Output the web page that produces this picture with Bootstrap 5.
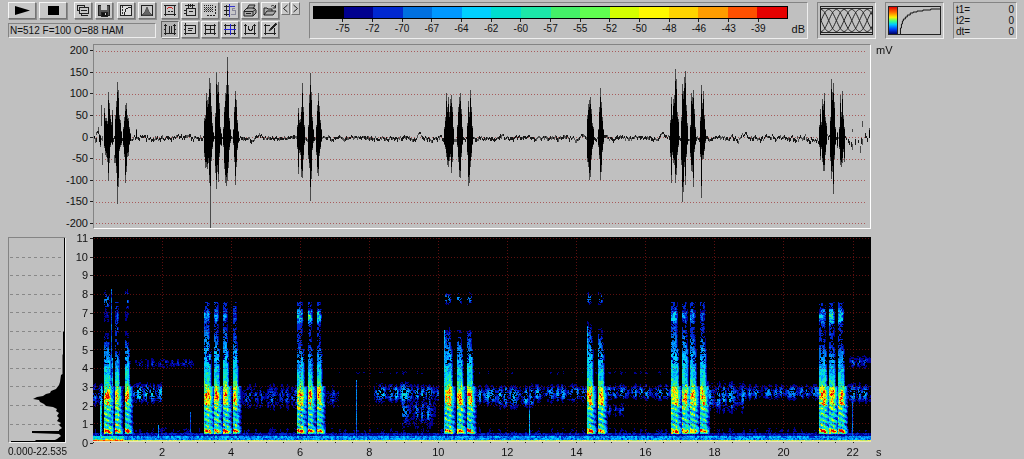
<!DOCTYPE html>
<html lang="en">
<head>
<meta charset="utf-8">
<meta name="viewport" content="width=device-width, initial-scale=1">
<title>Sound analysis</title>
<link href="https://cdn.jsdelivr.net/npm/bootstrap@5.3.0/dist/css/bootstrap.min.css" rel="stylesheet">
<script src="https://cdn.jsdelivr.net/npm/bootstrap@5.3.0/dist/js/bootstrap.bundle.min.js"></script>
<style>
body{background:#c0c0c0;color:#111;font:11px/12px "Liberation Sans",Arial,sans-serif}
.toolbar{gap:9px;padding:2px 7px 5px 8px}
.left-tools{gap:5px}
.file-tools{width:148px}
.icon-grid{display:grid;grid-template-columns:repeat(6,20px);gap:2px 0}
.tool{width:18px;height:17px;padding:0;border:1px solid;border-color:#f4f4f4 #747474 #747474 #f4f4f4;border-radius:0;background:#c8c8c8;box-shadow:1px 1px 0 #8c8c8c;display:flex;align-items:center;justify-content:center;color:#111}
.tool:hover,.tool.active{color:#111;background:#b4b4b4}
.tool.active{border-color:#666 #eee #eee #666}
.tool svg{width:14px;height:13px;fill:none;stroke:#222;shape-rendering:crispEdges}
.tool-wide{width:28px}
.tool-wide svg{width:20px;fill:#000;stroke:none;shape-rendering:auto}
.tool-slim{width:9px;height:13px;box-shadow:none}
.tool-slim svg{width:7px;height:9px;shape-rendering:auto}
.arrows{gap:1px;margin-left:-5px}
.sunken{border:1px solid;border-color:#848484 #eee #eee #848484}
.status{height:15px;padding:0 1px;margin-top:4px;font-size:10px;line-height:14px}
.panel-top{height:37px}
.scale{padding:3px 2px 0 3px}
.scale-bar{height:13px;border:1px solid #000}
.scale-labels{padding:0 3.125%;font-size:10px}
.scale-labels span::before{content:"";display:block;width:1px;height:3px;background:#222;margin:0 auto 1px}
.db{width:17px;padding-top:17px;text-align:right}
.win{width:59px;padding:3px 2px}
.win svg{width:100%;height:29px;border:1px solid #222}
.gamma{gap:1px;border:1px solid #222;height:29px}
.ramp{width:9px;background:linear-gradient(#e00000,#ff7000 20%,#fff000 38%,#40ff80 52%,#00c8ff 65%,#0040ff 82%,#000060);border-right:1px solid #222}
.gamma svg{border:0;height:27px;min-width:0}
.times{width:64px;padding:1px 2px;font-size:10px}
.times td{padding:0}
.times table{line-height:11px}
.plots{display:grid;grid-template-columns:58px 27px minmax(0,1fr) 153px;grid-template-rows:185px 206px auto;row-gap:8px;padding-left:8px}
.wave-axis{grid-column:1/3}
.axis{display:flex;flex-direction:column;justify-content:space-between;text-align:right;line-height:12px}
.axis span::after{content:"";display:inline-block;width:3px;height:1px;background:#222;vertical-align:3px;margin-left:2px}
.freq-axis{margin:-5px 0 -6px}
.plots canvas{display:block;width:100%;height:100%}
.wave{border:1px solid;border-color:#848484 #fff #fff #848484}
.spectrum svg{display:block;width:100%;height:100%}
.unit{padding-left:5px}
.caption-row{margin-top:-5px}
.range{white-space:nowrap;font-size:10px}
.time-axis{padding-left:4.4375%}
.time-axis span{flex:0 0 9.29%;text-align:center}
</style>
</head>
<body>
<header class="toolbar d-flex align-items-start">
 <div class="left-tools d-flex">
  <div class="file-tools">
   <div class="d-flex justify-content-between">
    <button class="btn tool tool-wide" aria-label="Play"><svg viewBox="0 0 20 13"><path d="M3 2L18 6.500L3 11Z"/></svg></button>
    <button class="btn tool tool-wide" aria-label="Stop"><svg viewBox="0 0 20 13"><path d="M5 2h11v9H5z"/></svg></button>
    <span></span>
    <button class="btn tool" aria-label="Copy settings"><svg viewBox="0 0 14 13"><path d="M1 1.500h7v2M1.500 1v5h2M3.500 3.500H13M3.500 3v6h9v-5M5.500 9v2.500h6M5 6.500h6"/></svg></button>
    <button class="btn tool" aria-label="Save"><svg viewBox="0 0 14 13"><path d="M1.500 1.500h11v10h-11z" fill="#555"/><path d="M4 1h6v5H4z" fill="#ccc" stroke="none"/><path d="M4 8h6v4H4z" fill="#111"/><path d="M8.500 9v2" stroke="#ccc"/></svg></button>
    <button class="btn tool" aria-label="Transfer curve"><svg viewBox="0 0 14 13"><path d="M1.500 1.500h11v10h-11z" fill="#ddd"/><path d="M3.500 2v9" stroke="#333" stroke-dasharray="2 1"/><path d="M5.500 11V8M6.500 8V5M7.500 5V4H9M9 3.500h3"/></svg></button>
    <button class="btn tool" aria-label="Window shape"><svg viewBox="0 0 14 13"><path d="M1.500 1.500h11v10h-11z"/><path d="M2 11L5 8L7 3L9 8L12 11Z" fill="#666" stroke="#555" style="shape-rendering:auto"/></svg></button>
   </div>
   <div class="status sunken">N=512 F=100 O=88 HAM</div>
  </div>
  <div class="icon-grid">
   <button class="btn tool" aria-label="Spectrogram view"><svg viewBox="0 0 14 13"><path d="M2.500 1v11M1 10.500h12M11.500 1v11M1 1.500h12"/><path d="M5 3.500h4M4 4.500h1M9 4.500h1" stroke="#c22"/><path d="M5 7.500h5" stroke-dasharray="2 1"/></svg></button>
   <button class="btn tool" aria-label="Scroll display"><svg viewBox="0 0 14 13"><path d="M2 1.500h10M5.500 0v4M7.500 0v3M9.500 0v4M3.500 4.500h9v7h-9zM1 6.500h3M1 9.500h3M6 7.500h4"/></svg></button>
   <button class="btn tool" aria-label="Selection"><svg viewBox="0 0 14 13"><path d="M1 1.500h9M1.500 1v8M3 3.500h7M3 5.500h7M3 7.500h7" stroke-dasharray="1 1"/><path d="M2 4.500h8M2 6.500h8" stroke="#666" stroke-dasharray="1 1"/><path d="M12.500 2v9M4 11.500h9" stroke-dasharray="2 1"/></svg></button>
   <button class="btn tool" aria-label="Cut sound"><svg viewBox="0 0 14 13"><path d="M1 2.500h5M1 6.500h5M1 10.500h5M3.500 1v11"/><path d="M6.500 0v13M7 2.500h5" stroke="#33c"/><path d="M12 4.500H9.500v2h3v4H8" stroke="#889"/></svg></button>
   <button class="btn tool" aria-label="Print"><svg viewBox="0 0 14 13" style="shape-rendering:auto"><path d="M4 5L6 1H12L10 5M1 7L4 4H11L13 6V9L10 12H1Z" fill="#aaa"/><path d="M1 7.500H10L13 5M3 9.500h5M10 8v4"/></svg></button>
   <button class="btn tool" aria-label="Open"><svg viewBox="0 0 14 13" style="shape-rendering:auto"><path d="M1 11V4h3l1 1h4v2M1 11L4 7h9l-3 4Z" fill="#aaa"/><path d="M8 2.500c2-2 3-1 4 1M12.500 1v3h-3"/></svg></button>
   <button class="btn tool active" aria-label="Grid columns"><svg viewBox="0 0 14 13"><path d="M2.500 1v11M6.500 3v8M8.500 3v8M11.500 1v11M1 10.500h12M1 2.500h3M10 2.500h3M1 6.500h2M11 6.500h2"/></svg></button>
   <button class="btn tool" aria-label="List view"><svg viewBox="0 0 14 13"><path d="M2.500 0v12M1 2.500h12M1 10.500h12M12.500 2v9M5 5.500h5M5 7.500h4M1 6.500h2"/></svg></button>
   <button class="btn tool" aria-label="Cross cursor"><svg viewBox="0 0 14 13"><path d="M2.500 1v11M7.500 2v9M11.500 1v11M1 2.500h12M3 6.500h9M1 10.500h12"/></svg></button>
   <button class="btn tool" aria-label="Blue cursor"><svg viewBox="0 0 14 13"><path d="M2.500 1v11M11.500 1v11M1 2.500h12M1 10.500h12"/><path d="M7.500 1v11M1 6.500h12" stroke="#22d"/></svg></button>
   <button class="btn tool" aria-label="Marker"><svg viewBox="0 0 14 13"><path d="M2.500 1v11M11.500 1v11M1 2.500h3M10 2.500h3M1 10.500h12M5.500 3v3h1v1h2v-1h1V3"/></svg></button>
   <button class="btn tool" aria-label="Draw label"><svg viewBox="0 0 14 13"><path d="M2.500 1v11M11.500 5v7M1 2.500h6M1 10.500h12"/><path d="M13 0L8 5L6 8L9 6L14 1" fill="#222" style="shape-rendering:auto"/></svg></button>
  </div>
  <div class="arrows d-flex">
   <button class="btn tool tool-slim" aria-label="Previous"><svg viewBox="0 0 7 9"><path d="M5.500 1L1.500 4.500L5.500 8"/></svg></button>
   <button class="btn tool tool-slim" aria-label="Next"><svg viewBox="0 0 7 9"><path d="M1.500 1L5.500 4.500L1.500 8"/></svg></button>
  </div>
 </div>
 <div class="scale panel-top sunken d-flex flex-grow-1">
  <div class="flex-grow-1">
   <div class="scale-bar d-flex" id="scaleBar"></div>
   <div class="scale-labels d-flex" id="scaleLabels"></div>
  </div>
  <div class="db">dB</div>
 </div>
 <div class="win panel-top sunken"><svg class="d-block" viewBox="0 0 53 27" preserveAspectRatio="none" aria-label="Window overlap"><path id="overlap" fill="none" stroke="#222"/></svg></div>
 <div class="win panel-top sunken"><div class="gamma d-flex"><div class="ramp flex-shrink-0"></div><svg viewBox="0 0 42 27" preserveAspectRatio="none" aria-label="Colour curve"><path d="M1.500 27V21h1V17h1V14h1V12h2V10h2V8h3V6h3V5h4V4h6V3h8V2h10" fill="none" stroke="#111" shape-rendering="crispEdges"/></svg></div></div>
 <div class="times panel-top sunken"><table class="w-100"><tbody>
  <tr><td>t1=</td><td class="text-end">0</td></tr>
  <tr><td>t2=</td><td class="text-end">0</td></tr>
  <tr><td>dt=</td><td class="text-end">0</td></tr></tbody></table></div>
</header>
<main class="plots">
 <div class="axis wave-axis" id="waveAxis"></div>
 <div class="wave"><canvas id="wave" role="img" aria-label="Waveform"></canvas></div>
 <div class="unit">mV</div>
 <div class="spectrum sunken"><svg viewBox="0 0 56 204" preserveAspectRatio="none" aria-label="Mean spectrum"><path id="specGrid" stroke="#888" stroke-dasharray="3 3" shape-rendering="crispEdges"/><path d="M56 0H55V93L54 94V116L53.500 117V136L52 137L51 144L50 147L47 151L42 153L41 155L37 156L34 158L28 159L24 161L30 162L31 164L35 166L37 168L44 169L48 171L47 173L50 175L48 178L50 180L48 183L52 185L50 187L53 190L50 192V193H23V195L50 196L52 198L48 201L46 202H27L26 203H2V204H56Z"/></svg></div>
 <div class="axis freq-axis" id="freqAxis"></div>
 <div><canvas id="sono" role="img" aria-label="Spectrogram"></canvas></div>
 <div></div>
 <div class="caption-row range">0.000-22.535</div>
 <div></div>
 <div class="caption-row time-axis d-flex" id="timeAxis"></div>
 <div class="caption-row unit">s</div>
</main>
<script>
const $ = id => document.getElementById(id);
const palette = ['#000000','#00008f','#0028d0','#0070e0','#0098ff','#00d0ff','#00dfcf','#1ce8a8','#44f068','#60ff50','#d4ff00','#fff800','#ffd400','#ff9c00','#ff5000','#e60000'];
const span = t => '<span>' + t + '</span>';
$('scaleBar').innerHTML = palette.map(c => '<div class="flex-fill" style="background:' + c + '"></div>').join('');
$('scaleLabels').innerHTML = [75,72,70,67,64,62,60,57,55,52,50,48,46,43,39].map(v => '<span class="flex-fill text-center">-' + v + '</span>').join('');
$('waveAxis').innerHTML = [200,150,100,50,0,-50,-100,-150,-200].map(span).join('');
$('freqAxis').innerHTML = [11,10,9,8,7,6,5,4,3,2,1,0].map(span).join('');
$('timeAxis').innerHTML = [2,4,6,8,10,12,14,16,18,20,22].map(span).join('');

let lattice = 'M0 1.500H53M0 25.500H53';
for (let s = -32; s < 53; s += 8) {
  for (let i = 0; i <= 32; i++) lattice += (i ? 'L' : 'M') + (s + i) + ' ' + (13.5 + 11 * Math.cos(i / 16 * Math.PI)).toFixed(1);
}
$('overlap').setAttribute('d', lattice);
let sg = '';
for (let k = 1; k < 11; k++) sg += 'M1 ' + (Math.round(k * 18.55) + .5) + 'H54';
$('specGrid').setAttribute('d', sg);

/* Call peaks: column, height above zero, depth below zero */
const spikes = '0,1,2;2,5,-2;4,10,-6;5,3,5;6,1,10;7,32,-11;8,-16,28;10,29,11;11,19,18;12,19,20;13,16,25;14,45,44;15,34,26;16,22,10;17,15,6;18,27,8;20,-18,26;21,22,26;22,36,36;23,55,67;24,47,50;25,22,14;26,17,10;27,6,8;29,10,10;30,20,20;31,32,46;32,34,35;33,22,20;34,19,19;35,10,8;36,4,4;42,8,2;110,19,20;111,22,31;112,44,30;113,37,32;114,40,26;115,59,46;116,54,91;117,31,24;118,14,12;119,5,5;121,24,36;122,65,52;123,52,35;124,55,45;125,34,20;126,10,8;127,4,9;129,10,10;130,30,32;131,44,46;132,52,49;133,80,44;134,52,31;135,19,13;136,8,6;139,8,8;140,30,25;141,46,48;142,37,30;143,17,13;144,6,6;203,12,12;204,29,37;205,17,16;206,18,18;207,30,40;208,54,41;209,30,22;210,12,8;214,12,22;215,42,31;216,64,64;217,45,42;218,20,13;219,8,6;222,12,18;223,32,36;224,44,39;225,31,19;226,17,12;227,8,5;350,10,8;351,20,12;352,44,20;353,30,28;354,40,30;355,25,24;356,38,20;357,42,36;358,30,25;359,10,8;363,12,10;364,30,25;365,40,40;366,44,41;367,28,20;368,10,8;373,14,18;374,36,49;375,25,46;376,47,30;377,30,20;378,11,8;493,22,25;494,33,30;495,37,43;496,40,40;497,28,22;498,14,12;499,10,8;504,8,10;505,30,22;506,49,43;507,35,35;508,20,15;509,8,7;576,17,20;577,40,46;578,22,18;579,38,26;580,42,28;581,68,46;582,58,38;583,25,18;584,18,10;587,20,28;588,53,65;589,46,55;590,60,30;591,66,48;592,32,20;593,14,8;596,12,20;597,44,34;598,40,35;599,47,50;600,28,15;601,10,8;606,20,20;607,52,61;608,34,22;609,46,22;610,22,14;611,8,6;725,12,10;726,28,23;727,15,12;728,38,25;729,33,34;730,44,34;731,20,18;732,14,8;736,20,24;737,58,42;738,45,35;739,54,57;740,35,22;741,10,8;743,5,11;745,10,12;746,42,28;747,25,30;748,46,26;749,22,15;750,10,25;758,8,-5;766,-9,16;768,16,-10;775,9,1'
  .split(';').map(s => s.split(',').map(Number));
/* Call columns: start, width, top frequency in kHz, strength of the upper band */
const calls = [[10,8,5.3,.1],[21,5,4.9,.2],[31,5,5.4,.1],[110,8,6.2,.3],[120,6,5.9,.3],[129,6,6.1,.25],[139,5,5.8,.18],[203,8,5.2,.36],[214,5,5.1,.5],[223,5,5.2,.42],[351,8,5.6,0],[363,6,5.5,0],[373,6,5.6,0],[493,6,5.9,0],[504,6,5.6,0],[577,8,6.2,.36],[588,6,6,.3],[596,6,5.8,.3],[606,6,5.7,.2],[725,8,5.2,.36],[735,6,5.1,.52],[744,6,5.2,.42]];
/* Faint reverberation: from, to, centre kHz, half height, strength */
const haze = [[0,9,2.5,.6,.24],[36,68,2.6,.5,.36],[36,100,4.2,.3,.14],[145,203,2.4,.7,.19],[228,245,2.4,.6,.17],[280,345,2.6,.45,.32],[308,342,1.6,.9,.22],[306,318,2.6,.5,.42],[379,437,2.5,.5,.3],[400,440,2.3,.5,.28],[437,493,2.6,.45,.28],[510,577,2.65,.4,.28],[510,530,1.7,.4,.17],[611,650,2.4,.8,.28],[650,725,2.65,.4,.25],[752,777,2.6,.5,.3],[755,777,4.3,.35,.2],[245,577,3.7,.15,.07],[0,777,.55,.3,.08]];
const lines = [[7,.1,2.2,.55],[8,.1,3,.35],[18,.1,8.2,.24],[19,.1,4.5,.4],[97,0,1.6,.2],[263,.1,3.3,.27],[435,.1,1.7,.4],[435,1.7,3,.2],[65,0,.9,.35],[758,0,2.2,.22],[351,.4,6,.4],[493,.4,6.2,.38]];
function rng(seed) { return () => (seed = (seed * 16807) % 2147483647) / 2147483647; }
function prep(c) {
  const w = c.width = c.clientWidth, h = c.height = c.clientHeight;
  return [c.getContext('2d'), w, h];
}
function drawWave() {
  const [g, w, h] = prep($('wave')), r = rng(77), k = w / 776, zero = Math.round(h / 2);
  for (let i = -4; i <= 4; i++) {
    g.fillStyle = '#a85c5c';
    const y = Math.round(zero + i * 21.6);
    for (let x = 2; x < w - 3; x += 3) g.fillRect(x, y, 1, 1);
  }
  let v = 0;
  for (let x = 0; x < w; x++) {
    const near = (x > 36 && x < 110) || (x > 630 && x < 726), edge = x < 10 || x > w - 24;
    const amp = edge ? 5 : near ? 2.4 : 1.5;
    v = v * .5 + (r() - .5) * amp * 2;
    const bump = 4 * Math.exp(-(((x + 15) % 81 - 17) ** 2) / 12) - 3 * Math.exp(-(((x + 15) % 81 - 11) ** 2) / 7);
    g.fillStyle = r() > .3 ? '#181818' : '#555';
    if (!edge || r() > .4) g.fillRect(x, Math.round(zero - v - bump * .8), 1, 2 + Math.floor(r() * (edge ? 5 : 2.4)));
  }
  for (const [x, u, d] of spikes) {
    const px = Math.round(x * k), top = zero - u, len = Math.min(u + d, h - top);
    g.fillStyle = '#4a4a4a'; g.fillRect(px, top, 1, len);
    g.fillStyle = '#000';
    if (u > 0 && d > 0) g.fillRect(px, Math.round(zero - u * .82), 1, Math.round((u + Math.min(d, 60)) * .82));
  }
}
function drawSono() {
  const [g, w, h] = prep($('sono')), r = rng(4242), k = w / 777, H = h - 2;
  g.fillStyle = '#000'; g.fillRect(0, 0, w, h);
  const bell = (f, c, s) => Math.exp(-((f - c) ** 2) / (2 * s * s));
  const bw = Math.ceil(w / 2) + 2, blocks = Array.from({length: bw * (Math.ceil(h / 3) + 2)}, r);
  for (let y = 1; y < h - 1; y++) {
    const f = (H - y) / 18.55;
    for (let x = 0; x < w; x++) {
      const X = x / k, n = r(), b = blocks[Math.floor(y / 3) * bw + (x >> 1)], m = n * .45 + b * .55;
      let v = 0;
      for (const [s, cw, top, hi] of calls) {
        const dx = X - s;
        if (dx < 0 || dx > cw + 6) continue;
        let p;
        if (f < .4) p = .12;
        else {
          p = f < 1.7 ? .43 : f < 3 ? .5 : Math.max(.1, .46 - (f - 3) / (top - 3) * .3);
          p += .42 * bell(f, 2.42, .3) * bell(dx, cw * .5, cw * .32);
          p += .5 * bell(f, .56, .09);
          if (f < 2.1) p += .16 * Math.sin((f * 3.4 + dx * .09) * Math.PI * 2);
          if (f > top) p = m > .5 ? Math.max(.14 * bell(f, top, .4), hi * bell(f, 6.75, .32), hi > .15 && f < 7.5 ? .14 : 0) : hi * .8 * bell(f, 6.75, .25);
          if (f > 4.2 && f <= top && m < .36) p *= .3;
          if (hi === 0 && m > .55) p = Math.max(p, .22 * bell(f, 7.7, .2));
          if (hi < .15 && hi > 0 && m > .6) p = Math.max(p, .2 * bell(f, 7.6, .35));
        }
        const core = f > 5 ? cw * .6 : cw * .75;
        const shape = dx < core ? 1 : Math.max(0, 1 - (dx - core) / (f < 3 ? 6 : 2.5));
        v = Math.max(v, p * shape * (.5 + .9 * m));
      }
      for (const [a, z, c, s, q] of haze) {
        if (X >= a && X < z) {
          const clump = .6 + .4 * Math.sin(X * .75 + Math.sin(X * .23) * 2);
          v = Math.max(v, q * bell(f, c, s * .65) * (.3 + .8 * clump) * (m > .42 ? m * 1.45 : .1));
        }
      }
      for (const [a, f0, f1, q] of lines) if (Math.round(X) === a && f >= f0 && f <= f1) v = Math.max(v, q * (.4 + m * .8));
      if (f < .45) v = Math.max(v, (f < .1 ? .42 : f < .28 ? .3 : .14) * (.4 + m * .95));
      if (X < 30 && f < .3) v = Math.max(v, (f < .15 ? .8 : .5) * (.4 + m * .8));
      const i = Math.max(0, Math.min(15, Math.floor(v * 16)));
      if (i) {
        g.fillStyle = palette[i];
        g.fillRect(x, y, 1, 1);
      }
    }
  }
  g.fillStyle = 'rgba(150,25,25,.62)';
  for (let f = 1; f < 12; f++) for (let x = 1; x < w; x += 3) g.fillRect(x, Math.round(H - f * 18.55) + 1, 1, 1);
  for (let t = 2; t < 23; t += 2) for (let y = 1; y < H - 6; y += 3) g.fillRect(Math.round(t / 22.535 * w), y, 1, 1);
  for (let x = 0; x < w; x++) {
    const n = r();
    g.fillStyle = x < 30 ? (n > .4 ? '#ff9c00' : '#ff3000') : n > .5 ? '#d8e850' : n > .2 ? '#a8e878' : '#f8f060';
    g.fillRect(x, H - 1, 1, 1);
  }
  g.fillStyle = '#e8e8b8'; g.fillRect(0, H, w, 1);
  g.fillStyle = '#c0c0c0'; g.fillRect(0, H + 1, w, 1);
  g.fillStyle = '#222';
  for (let t = 0; t < 22.5; t += .5) g.fillRect(Math.round(t / 22.535 * w), H + 1, 1, 1);
}
function draw() { drawWave(); drawSono(); }
draw();
addEventListener('resize', draw);
</script>
</body>
</html>
